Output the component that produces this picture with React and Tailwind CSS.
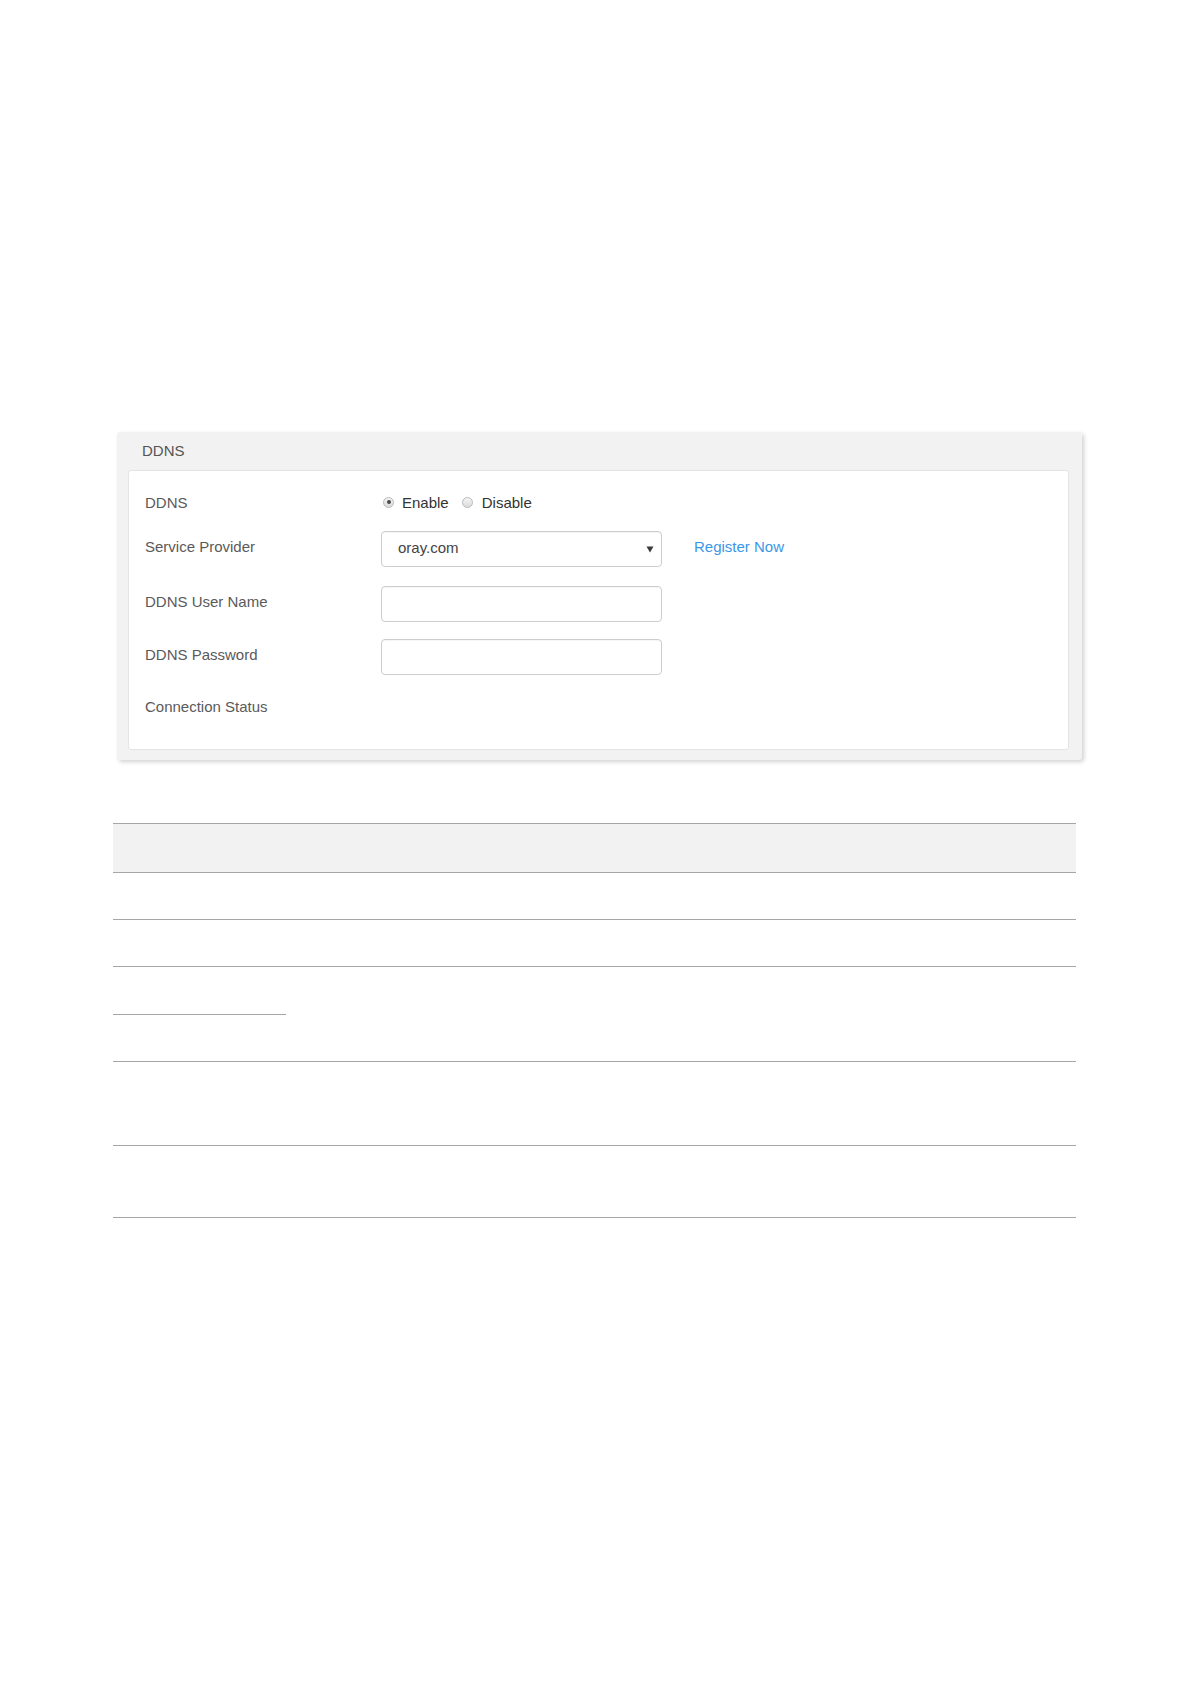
import React from "react";

function Radio({ checked }) {
  return (
    <span className="flex h-[11px] w-[11px] shrink-0 items-center justify-center rounded-full border border-[#b9b9b9] bg-gradient-to-b from-[#f4f4f4] to-[#dcdcdc]">
      {checked && <span className="h-[4px] w-[4px] rounded-full bg-[#4a4a4a]" />}
    </span>
  );
}

function Field({ children }) {
  return (
    <div className="relative flex h-[36px] w-[281px] items-center rounded-[4px] border border-[#cdcdcd] bg-white pl-[16px] shadow-[inset_0_1px_1px_rgba(0,0,0,0.04)]">
      {children}
    </div>
  );
}

export default function App() {
  const labelCls = "w-[236px] shrink-0 text-[15px] text-[#5a5a5a]";
  const labelUp = "w-[236px] shrink-0 pb-[4px] text-[15px] text-[#5a5a5a]";
  return (
    <div
      className="min-h-[1684px] w-[1191px] bg-white pt-[432px]"
      style={{ fontFamily: '"Liberation Sans", Arial, sans-serif' }}
    >
      {/* DDNS panel */}
      <div className="ml-[117px] flex h-[328px] w-[965px] flex-col rounded-[3px] bg-[#f2f2f2] shadow-[2px_2px_4px_rgba(0,0,0,0.18)]">
        <div className="flex h-[38px] shrink-0 items-center pl-[25px] text-[15px] text-[#555555]">
          DDNS
        </div>
        <div className="ml-[11px] h-[280px] w-[941px] rounded-[3px] border border-[#e4e4e4] bg-white pl-[16px]">
          {/* Row 1 */}
          <div className="mt-[17px] flex h-[30px] items-center">
            <div className={labelCls}>DDNS</div>
            <div className="flex items-center text-[15px] text-[#333333]">
              <span className="ml-[2px] mb-[2px] flex">
                <Radio checked />
              </span>
              <span className="ml-[8px]">Enable</span>
              <span className="ml-[13px] mb-[2px] flex">
                <Radio />
              </span>
              <span className="ml-[9px]">Disable</span>
            </div>
          </div>
          {/* Row 2 */}
          <div className="mt-[13px] flex h-[36px] items-center">
            <div className={labelUp}>Service Provider</div>
            <Field>
              <span className="pb-[2px] text-[15px] text-[#444444]">oray.com</span>
              <svg
                className="absolute right-[7px] top-1/2 -translate-y-1/2"
                width="8"
                height="8"
                viewBox="0 0 8 8"
              >
                <path d="M0.5 1.5 L7.5 1.5 L4 7.5 Z" fill="#3a3a3a" />
              </svg>
            </Field>
            <span className="ml-[32px] pb-[4px] text-[15px] text-[#3a97e6]">Register Now</span>
          </div>
          {/* Row 3 */}
          <div className="mt-[19px] flex h-[36px] items-center">
            <div className={labelUp}>DDNS User Name</div>
            <Field />
          </div>
          {/* Row 4 */}
          <div className="mt-[17px] flex h-[36px] items-center">
            <div className={labelUp}>DDNS Password</div>
            <Field />
          </div>
          {/* Row 5 */}
          <div className="mt-[17px] flex h-[30px] items-center">
            <div className={labelCls}>Connection Status</div>
          </div>
        </div>
      </div>

      {/* Table */}
      <div className="ml-[113px] mt-[63px] w-[963px]">
        <div className="h-[49px] border-t border-[#a6a6a6] bg-[#f2f2f2]" />
        <div className="h-[47px] border-t border-[#a6a6a6]" />
        <div className="h-[47px] border-t border-[#a6a6a6]" />
        <div className="flex h-[95px] border-t border-[#a6a6a6]">
          <div className="flex w-[173px] flex-col">
            <div className="h-[47px]" />
            <div className="h-[47px] border-t border-[#a6a6a6]" />
          </div>
          <div className="flex-1" />
        </div>
        <div className="h-[84px] border-t border-[#a6a6a6]" />
        <div className="h-[73px] border-y border-[#a6a6a6]" />
      </div>
    </div>
  );
}
